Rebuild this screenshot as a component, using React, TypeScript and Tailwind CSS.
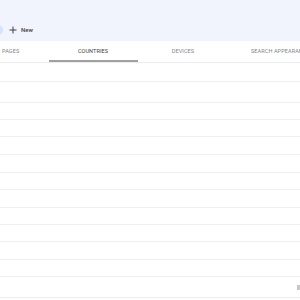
import React from 'react';

const rowHeights = [19, 21, 17, 17, 18, 18, 17, 18, 17, 17, 18, 17];

const App: React.FC = () => {
    return (
        <div className="w-[300px] h-[300px] overflow-hidden bg-white" style={{ fontFamily: 'Roboto, "Liberation Sans", sans-serif' }}>
            <div className="h-[41px] bg-[#f1f4fc] pt-[24px]">
                <div className="flex items-center h-[12px]">
                    <div className="w-[10px] h-[10px] rounded-full bg-[#d3e3fd] -ml-[7px] shrink-0" />
                    <svg className="ml-[6px] shrink-0" width="8" height="8" viewBox="0 0 8 8">
                        <path d="M4 0.5v7M0.5 4h7" stroke="#3c4043" strokeWidth="1" />
                    </svg>
                    <span className="ml-[4px] text-[6px] text-[#3c4043] font-medium leading-none">New</span>
                </div>
            </div>
            <div className="flex h-[22px] border-b border-[#ececec] text-[5.5px] text-[#80868b] tracking-[0.1px]">
                <div className="w-[48px] shrink-0 pl-[2px] flex items-center">PAGES</div>
                <div className="w-[90px] shrink-0 flex items-center justify-center relative text-[#3c4043]">
                    COUNTRIES
                    <div className="absolute left-[1px] right-0 bottom-0 h-[2px] bg-[#a0a0a0]" />
                </div>
                <div className="w-[90px] shrink-0 flex items-center justify-center">DEVICES</div>
                <div className="shrink-0 pl-[23px] flex items-center whitespace-nowrap">SEARCH APPEARANCE</div>
            </div>
            {rowHeights.map((h, i) => (
                <div key={i} className="border-b border-[#efefef]" style={{ height: h }} />
            ))}
            <div className="h-[21px] border-b border-[#e8eefb] flex justify-end items-center">
                <div className="w-[4px] h-[5px] bg-[#c8c8c8] -mr-[1px]" />
            </div>
        </div>
    );
};

export default App;
